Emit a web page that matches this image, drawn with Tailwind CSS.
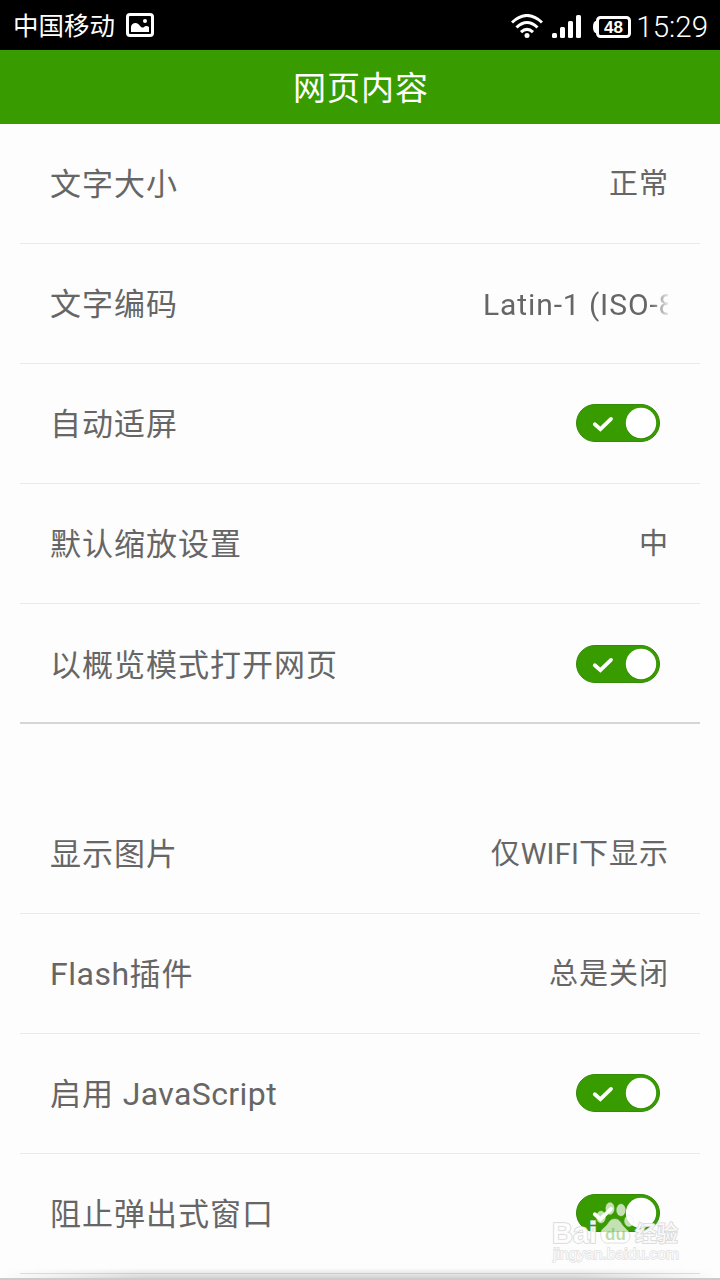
<!DOCTYPE html>
<html lang="zh-CN">
<head>
    <meta charset="UTF-8">
    <meta name="viewport" content="width=device-width, initial-scale=1.0">
    <title>网页内容</title>
    <script src="https://cdn.jsdelivr.net/npm/@tailwindcss/browser@4"></script>
</head>
<body class="relative w-[720px] h-[1280px] overflow-hidden bg-[#fdfdfd] text-[#666] font-['Roboto','Noto_Sans_CJK_SC',sans-serif]">
    <!-- symbols reused by the switches -->
    <svg class="hidden">
        <symbol id="switch" viewBox="0 0 84 38">
            <rect x="0.5" y="0.5" width="83" height="37" rx="18.5" fill="#389c00" stroke="#358a0b"/>
            <circle cx="65" cy="19.6" r="15.4" fill="#2b7a00" opacity=".6"/>
            <circle cx="65" cy="19" r="15.2" fill="#fff"/>
            <path d="M18.8 20.3l5.600 4.800 10.600-10.200" fill="none" stroke="#fff" stroke-width="3.800" stroke-linecap="round"/>
        </symbol>
    </svg>

    <!-- status bar -->
    <div class="h-[50px] bg-black text-white flex items-center pl-[13px] pr-3">
        <span class="text-[25.5px] leading-[50px] pt-px">中国移动</span>
        <svg class="ml-[11px] w-7 h-6" viewBox="0 0 28 24">
            <rect x="1.5" y="1.5" width="25" height="21" rx="2.5" fill="none" stroke="#fff" stroke-width="3"/>
            <circle cx="19" cy="8" r="2" fill="#fff"/>
            <path d="M5 19v-5c0-2 2-4 4.500-4 2 0 3 1 4 2.300 1.300 1.500 2.500 2.700 4 2.200 1.500-1.500 3.500-2 5.500-.5v5z" fill="#fff"/>
        </svg>
        <div class="ml-auto flex items-center">
            <svg class="mt-0.5 w-8 h-6" viewBox="0 0 32 24">
                <g fill="none" stroke="#fff" stroke-width="3">
                    <path d="M1 8.500Q16-5.500 31 8.500"/>
                    <path d="M5.500 13.500Q16 3.500 26.500 13.500"/>
                    <path d="M10 18.200Q16 12.400 22 18.200"/>
                </g>
                <circle cx="16" cy="21.400" r="2.500" fill="#fff"/>
            </svg>
            <svg class="ml-[9px] mt-[3px] w-[29px] h-6" viewBox="0 0 29 24" fill="#fff">
                <rect x="0" y="18" width="5" height="5" rx="1.500"/>
                <rect x="8" y="12" width="5" height="11" rx="1.500"/>
                <rect x="16" y="6" width="5" height="17" rx="1.500"/>
                <rect x="24" y="0" width="5" height="23" rx="1.500"/>
            </svg>
            <svg class="ml-3 mt-1 w-[38px] h-[22px]" viewBox="0 0 38 22">
                <rect x="4.500" y="1.500" width="32" height="19" rx="3" fill="none" stroke="#fff" stroke-width="3"/>
                <path d="M4 5H2.500Q0 6 0 11t2.500 6H4z" fill="#fff"/>
                <text x="20.500" y="17" text-anchor="middle" fill="#fff" font-family="Liberation Sans, sans-serif" font-weight="bold" font-size="17">48</text>
            </svg>
            <span class="ml-[5px] mt-1.5 text-[29.5px] leading-none font-light">15:29</span>
        </div>
    </div>

    <!-- title -->
    <header class="h-[74px] bg-[#389c00] text-white flex items-center justify-center">
        <h1 class="text-[33px] tracking-[1px] leading-[74px] pt-1 pl-0.5">网页内容</h1>
    </header>

    <main class="px-5">
        <section>
            <div class="h-[120px] border-b border-[#ebebeb] flex items-center justify-between pl-[30px] pr-[31px] pt-[3px]">
                <span class="text-[31px] tracking-[1px]">文字大小</span>
                <span class="text-[29px] tracking-[1px]">正常</span>
            </div>
            <div class="h-[120px] border-b border-[#ebebeb] flex items-center justify-between pl-[30px] pr-8 pt-[3px]">
                <span class="text-[31px] tracking-[1px]">文字编码</span>
                <!-- long value fades out at the right -->
                <span class="w-[185px] pb-0.5 overflow-hidden whitespace-nowrap text-[30px] tracking-[0.9px] mask-r-from-[168px] mask-r-to-[188px]">Latin-1 (ISO-8859-1)</span>
            </div>
            <div class="h-[120px] border-b border-[#ebebeb] flex items-center justify-between pl-[30px] pr-10 pb-px">
                <span class="text-[31px] tracking-[1px] pt-1">自动适屏</span>
                <svg class="w-[84px] h-[38px]"><use href="#switch"/></svg>
            </div>
            <div class="h-[120px] border-b border-[#ebebeb] flex items-center justify-between pl-[30px] pr-[31px] pt-[3px]">
                <span class="text-[31px] tracking-[1px]">默认缩放设置</span>
                <span class="text-[29px] tracking-[1px]">中</span>
            </div>
            <div class="h-[120px] border-b-2 border-[#d6d6d6] flex items-center justify-between pl-[30px] pr-10 pt-0.5">
                <span class="text-[31px] tracking-[1px] pt-1">以概览模式打开网页</span>
                <svg class="w-[84px] h-[38px]"><use href="#switch"/></svg>
            </div>
        </section>

        <section class="mt-[70px]">
            <div class="h-[120px] border-b border-[#ebebeb] flex items-center justify-between pl-[30px] pr-[31px] pt-[3px]">
                <span class="text-[31px] tracking-[1px]">显示图片</span>
                <span class="text-[29px] tracking-[1px]">仅<span class="tracking-[0.2px]">WIFI</span>下显示</span>
            </div>
            <div class="h-[120px] border-b border-[#ebebeb] flex items-center justify-between pl-[30px] pr-[31px] pt-[3px]">
                <span class="text-[31px] tracking-[1px] pb-0.5"><span class="text-[32px] tracking-[0.5px]">Flash</span>插件</span>
                <span class="text-[29px] tracking-[1px]">总是关闭</span>
            </div>
            <div class="h-[120px] border-b border-[#ebebeb] flex items-center justify-between pl-[30px] pr-10 pb-px">
                <span class="text-[31px] tracking-[1px] pt-0.5">启用 <span class="text-[32px] tracking-[0.4px]">JavaScript</span></span>
                <svg class="w-[84px] h-[38px]"><use href="#switch"/></svg>
            </div>
            <div class="h-[120px] border-b border-[#e0e0e0] flex items-center justify-between pl-[30px] pr-10 pb-px">
                <span class="text-[31px] tracking-[1px] pt-1">阻止弹出式窗口</span>
                <svg class="w-[84px] h-[38px]"><use href="#switch"/></svg>
            </div>
        </section>
    </main>

    <!-- shadow at the bottom edge, softer towards the corners -->
    <div class="absolute inset-x-0 bottom-0 h-3 border-b border-[#c4c4c4] bg-linear-to-b from-black/0 to-black/18 mask-x-from-80% mask-x-to-100%"></div>
    <div class="absolute inset-x-0 bottom-0 h-0.5 bg-[#cbcbcb]"></div>

    <!-- watermark -->
    <svg class="absolute left-[540px] top-[1190px] w-[150px] h-[85px]" viewBox="0 0 150 85">
        <g fill="#fff" fill-opacity=".7" stroke="#ddd" stroke-opacity=".6" stroke-width=".6">
            <ellipse cx="61" cy="27" rx="4.500" ry="6"/>
            <ellipse cx="70" cy="18.500" rx="4.200" ry="6"/>
            <ellipse cx="81" cy="20" rx="4.400" ry="6"/>
            <ellipse cx="89" cy="31" rx="4.500" ry="5.500"/>
            <path stroke="#ccc" stroke-width="1" d="M75 29c-6 0-6 5-10 8-4 3-5 6-4 10 1 5 5 7 9 6h10c5 1 9-1 10-6 0-5-3-7-6-10-3-3-4-8-9-8z"/>
        </g>
        <g fill="#fff" fill-opacity=".85" stroke="#d8d8d8" stroke-width="1.600" paint-order="stroke">
            <text x="12" y="52.500" font-family="Liberation Sans, sans-serif" font-weight="bold" font-size="30" textLength="45" lengthAdjust="spacingAndGlyphs">Bai</text>
            <text x="95" y="50.500" font-family="Noto Sans CJK SC, sans-serif" font-weight="500" font-size="21.500">经验</text>
            <text x="13" y="69" stroke="#e0e0e0" stroke-width="1.300" font-family="Liberation Sans, sans-serif" font-size="15" textLength="126" lengthAdjust="spacingAndGlyphs">jingyan.baidu.com</text>
        </g>
        <text x="65" y="49.500" fill="#389c00" fill-opacity=".35" font-family="Liberation Sans, sans-serif" font-weight="bold" font-size="17">du</text>
    </svg>
</body>
</html>
